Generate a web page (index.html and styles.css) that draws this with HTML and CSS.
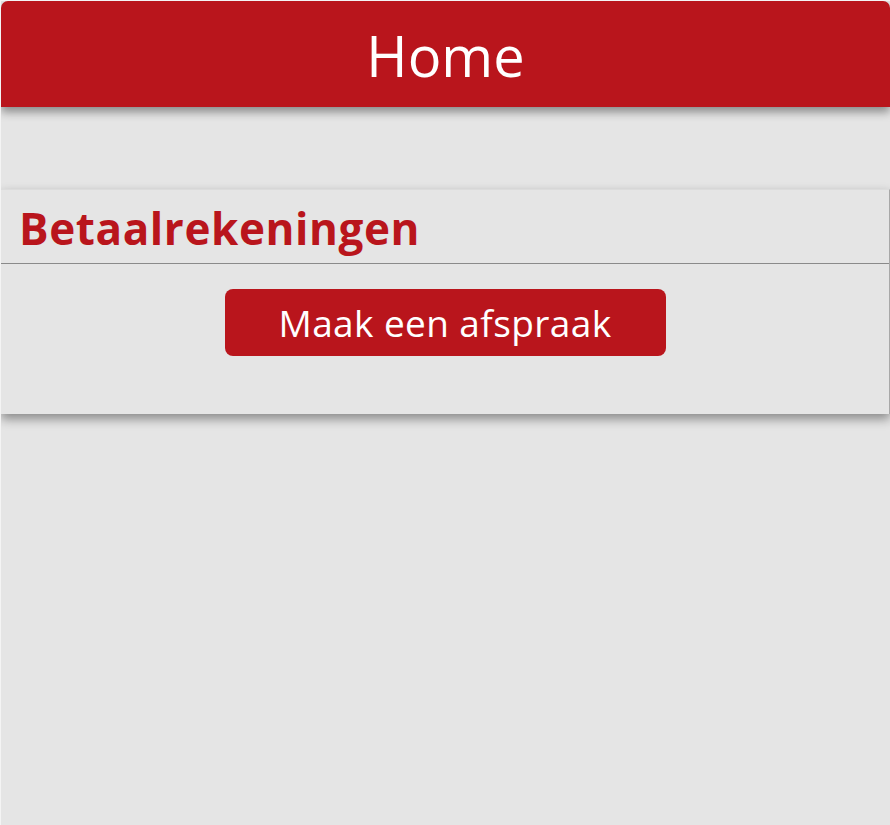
FILE: index.html
```html
<!DOCTYPE html>
<html lang="nl">
<head>
<meta charset="utf-8">
<title>Home</title>
<link rel="stylesheet" href="styles.css">
</head>
<body>
<div class="page">
  <header class="topbar"><h1 class="topbar-title">Home</h1></header>
  <section class="card">
    <h2 class="card-title">Betaalrekeningen</h2>
    <div class="card-body">
      <button class="btn">Maak een afspraak</button>
    </div>
  </section>
</div>
</body>
</html>
```

FILE: styles.css
```css
html, body {
  margin: 0;
  padding: 0;
  height: 100%;
}
body {
  background: #e5e5e5;
  font-family: "Open Sans", Lato, sans-serif;
}
.page {
  min-height: 824px;
  border-top: 1px solid #f4f4f4;
  border-left: 1px solid #f4f4f4;
  overflow: hidden;
}
.topbar {
  height: 106px;
  background: #b9151c;
  border-radius: 7px 7px 0 0;
  box-shadow: 0 5px 10px rgba(0, 0, 0, 0.4);
  display: flex;
  align-items: center;
  justify-content: center;
  position: relative;
  z-index: 1;
}
.topbar-title {
  margin: 0;
  color: #fff;
  font-weight: 400;
  font-size: 56px;
  line-height: 1;
  padding-top: 2px;
}
.card {
  margin-top: 82px;
  background: #e5e5e5;
  border-top: 1px solid #dcdcdc;
  border-right: 1px solid #a8a8a8;
  box-shadow: 0 5px 10px rgba(0, 0, 0, 0.4);
  height: 225px;
  box-sizing: border-box;
}
.card-title {
  margin: 0;
  padding: 8px 0 0 18px;
  height: 65px;
  border-bottom: 1px solid #8a8a8a;
  color: #b9151c;
  font-weight: 700;
  font-size: 44px;
  line-height: 60px;
  letter-spacing: 0.6px;
}
.card-body {
  display: flex;
  justify-content: center;
  padding-top: 25px;
}
.btn {
  width: 441px;
  height: 67px;
  border: none;
  border-radius: 8px;
  background: #b9151c;
  color: #fff;
  font-family: "Open Sans", Lato, sans-serif;
  font-size: 37px;
  font-weight: 400;
  letter-spacing: 0.4px;
  padding: 0;
}
```
